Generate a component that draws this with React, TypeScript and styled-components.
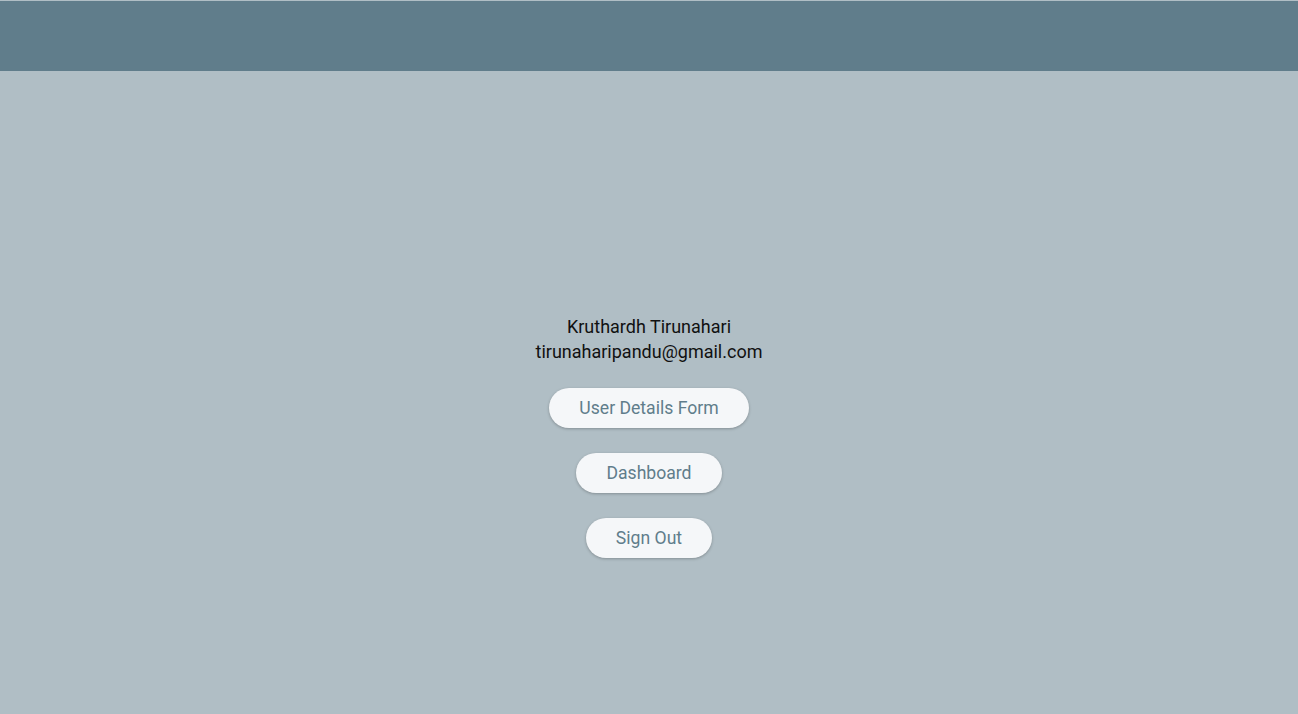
import React from "react";
import styled, { createGlobalStyle } from "styled-components";

const Global = createGlobalStyle`
  html, body { margin: 0; padding: 0; }
  body {
    background: #b0bec5;
    font-family: Roboto, "Noto Sans", sans-serif;
  }
`;

const Page = styled.div`
  min-height: 714px;
  padding-top: 1px;
  box-sizing: border-box;
  background: #b0bec5;
  display: flex;
  flex-direction: column;
`;

const Header = styled.header`
  height: 70px;
  background: #607d8b;
`;

const Main = styled.main`
  display: flex;
  flex-direction: column;
  align-items: center;
  padding-top: 243px;
`;

const Name = styled.div`
  font-size: 18px;
  line-height: 25px;
  color: #111;
  text-align: center;
`;

const Actions = styled.div`
  display: flex;
  flex-direction: column;
  align-items: center;
  gap: 25px;
  margin-top: 24px;
`;

const PillButton = styled.button`
  height: 40px;
  padding: 0 30px;
  border: none;
  border-radius: 20px;
  background: #f5f7f9;
  color: #607d8b;
  font-family: Roboto, "Noto Sans", sans-serif;
  font-size: 17.6px;
  box-shadow: 0 1px 3px rgba(0, 0, 0, 0.25);
  cursor: pointer;
`;

export default function App() {
  return (
    <>
      <Global />
      <Page>
        <Header />
        <Main>
          <Name>Kruthardh Tirunahari</Name>
          <Name>tirunaharipandu@gmail.com</Name>
          <Actions>
            <PillButton>User Details Form</PillButton>
            <PillButton>Dashboard</PillButton>
            <PillButton>Sign Out</PillButton>
          </Actions>
        </Main>
      </Page>
    </>
  );
}
